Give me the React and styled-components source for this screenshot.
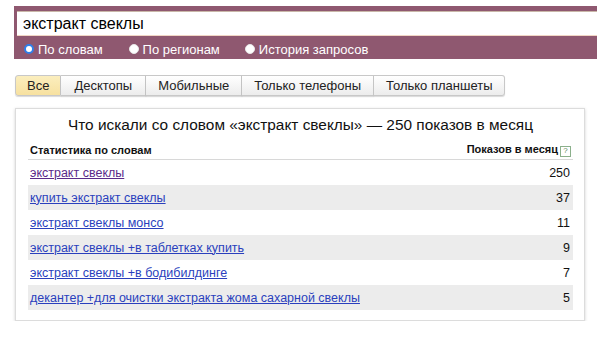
import React from 'react';
import styled, { createGlobalStyle } from 'styled-components';

const Global = createGlobalStyle`
  body {
    margin: 0;
    background: #fff;
    font-family: Arial, "Liberation Sans", sans-serif;
  }
`;

const Page = styled.div`
  padding: 6px 0 0 14px;
  width: 583px;
`;

const SearchBand = styled.div`
  background: #8f5870;
  padding: 5px 0 1px 3px;
`;

const SearchInput = styled.div`
  background: #fff;
  height: 25px;
  border-top: 1px solid #c9b7a8;
  border-bottom: 1px solid #f1d6c4;
  box-sizing: border-box;
  display: flex;
  align-items: center;
  padding-left: 6px;
  font-size: 16px;
  color: #000;
`;

const RadioRow = styled.div`
  display: flex;
  align-items: center;
  padding: 4px 0 0 7px;
  height: 18px;
`;

const RadioLabel = styled.label`
  display: flex;
  align-items: center;
  color: #fff;
  font-size: 13px;
  margin-right: ${p => p.gap}px;
`;

const Dot = styled.span`
  width: 10px;
  height: 10px;
  border-radius: 50%;
  background: #fff;
  box-sizing: border-box;
  border: ${p => (p.checked ? '2px solid #2f7ee8' : '1px solid #e8e8e8')};
  margin-right: 4px;
`;

const Tabs = styled.div`
  display: flex;
  margin: 16px 0 0 1px;
  height: 21px;
`;

const Tab = styled.div`
  height: 21px;
  box-sizing: border-box;
  padding: 0 ${p => p.pad}px;
  display: flex;
  align-items: center;
  font-size: 13px;
  color: #222;
  border: 1px solid #c8c8c8;
  border-left: ${p => (p.first ? '1px solid #c8c8c8' : 'none')};
  border-radius: ${p => (p.first ? '3px 0 0 3px' : p.last ? '0 3px 3px 0' : '0')};
  background: ${p => (p.active ? 'linear-gradient(#fbeebe, #f7e1a0)' : 'linear-gradient(#fff, #ececec)')};
  box-shadow: 0 1px 1px rgba(0, 0, 0, 0.15);
`;

const Panel = styled.div`
  margin: 12px 12px 0 1px;
  border: 1px solid #dcdcdc;
  box-shadow: 0 1px 3px rgba(0, 0, 0, 0.18);
  padding: 7px 11px 10px 12px;
`;

const Title = styled.div`
  text-align: center;
  font-size: 15.4px;
  color: #111;
  line-height: 18px;
`;

const Table = styled.div`
  margin-top: 7px;
`;

const HeadRow = styled.div`
  display: flex;
  justify-content: space-between;
  align-items: center;
  height: 18px;
  border-bottom: 1px solid #d8d8d8;
  padding: 0 2px;
  font-size: 11px;
  font-weight: bold;
  color: #111;
`;

const HelpBox = styled.span`
  display: inline-flex;
  align-items: center;
  justify-content: center;
  width: 9px;
  height: 9px;
  border: 1px solid #8bb08b;
  font-size: 8px;
  font-weight: normal;
  color: #5a8a5a;
  margin-left: 2px;
  line-height: 1;
`;

const Row = styled.div`
  display: flex;
  justify-content: space-between;
  align-items: center;
  height: 25px;
  padding: 0 3px 0 2px;
  background: ${p => (p.shaded ? '#ececec' : '#fff')};
  font-size: 12.5px;
`;

const Phrase = styled.a`
  color: ${p => (p.visited ? '#5a2a8a' : '#2a3fbd')};
  text-decoration: underline;
`;

const Count = styled.span`
  color: #111;
`;

const rows = [
  ['экстракт свеклы', 250],
  ['купить экстракт свеклы', 37],
  ['экстракт свеклы монсо', 11],
  ['экстракт свеклы +в таблетках купить', 9],
  ['экстракт свеклы +в бодибилдинге', 7],
  ['декантер +для очистки экстракта жома сахарной свеклы', 5],
];

const tabs = [
  ['Все', 11],
  ['Десктопы', 13],
  ['Мобильные', 12],
  ['Только телефоны', 12],
  ['Только планшеты', 12],
];

export default function App() {
  return (
    <Page>
      <Global />
      <SearchBand>
        <SearchInput>экстракт свеклы</SearchInput>
        <RadioRow>
          <RadioLabel gap={26}><Dot checked />По словам</RadioLabel>
          <RadioLabel gap={25}><Dot />По регионам</RadioLabel>
          <RadioLabel gap={0}><Dot />История запросов</RadioLabel>
        </RadioRow>
      </SearchBand>
      <Tabs>
        {tabs.map(([t, pad], i) => (
          <Tab key={t} pad={pad} active={i === 0} first={i === 0} last={i === tabs.length - 1}>
            {t}
          </Tab>
        ))}
      </Tabs>
      <Panel>
        <Title>Что искали со словом «экстракт свеклы» — 250 показов в месяц</Title>
        <Table>
          <HeadRow>
            <span>Статистика по словам</span>
            <span>Показов в месяц<HelpBox>?</HelpBox></span>
          </HeadRow>
          {rows.map(([phrase, n], i) => (
            <Row key={phrase} shaded={i % 2 === 1}>
              <Phrase href="#" visited={i === 0}>{phrase}</Phrase>
              <Count>{n}</Count>
            </Row>
          ))}
        </Table>
      </Panel>
    </Page>
  );
}
